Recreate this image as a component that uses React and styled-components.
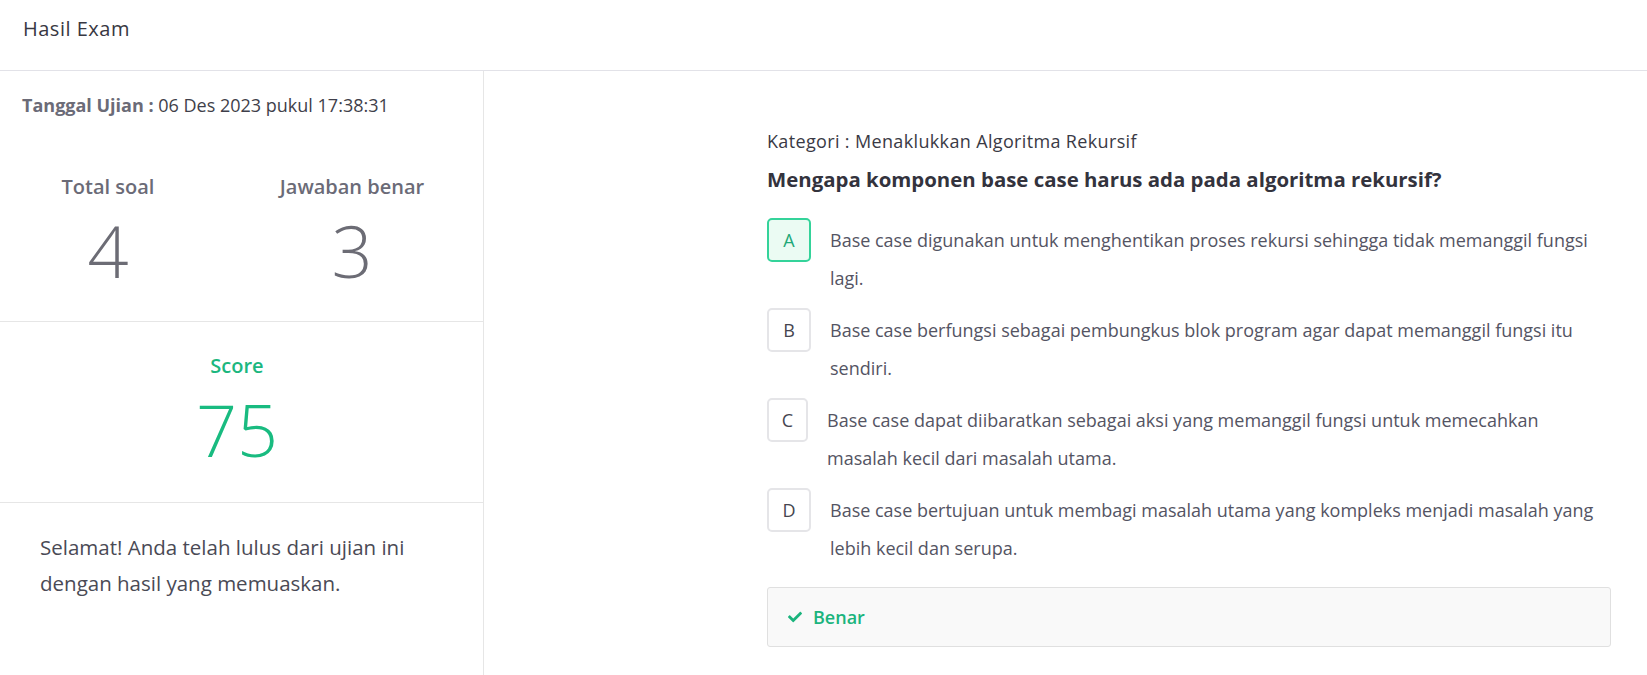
import React from "react";
import styled, { createGlobalStyle } from "styled-components";
import { FaCheck } from "react-icons/fa";

const GlobalStyle = createGlobalStyle`
  html, body { margin: 0; padding: 0; background: #fff; }
  body { font-family: "Open Sans", "Noto Sans", sans-serif; color: #3b3b45; }
  * { box-sizing: border-box; }
`;

const Page = styled.div`
  min-height: 100vh;
  display: flex;
  flex-direction: column;
`;

const Header = styled.header`
  height: 71px;
  padding: 14px 23px 0;
  border-bottom: 1px solid #e2e2e8;
  font-size: 20px;
  font-weight: 500;
  letter-spacing: 0.5px;
  line-height: 30px;
  color: #383842;
`;

const Main = styled.main`
  flex: 1;
  display: flex;
`;

const LeftPanel = styled.aside`
  width: 484px;
  flex: none;
  border-right: 1px solid #e6e6e6;
`;

const InfoSection = styled.section`
  padding: 21px 0 35px;
  border-bottom: 1px solid #e6e6e6;
`;

const DateRow = styled.div`
  padding: 0 22px;
  font-size: 18px;
  line-height: 27px;
  color: #3f3f4a;
`;

const DateLabel = styled.span`
  font-weight: 700;
  color: #6b6b77;
`;

const StatsGrid = styled.div`
  margin-top: 53px;
  display: grid;
  grid-template-columns: 216px 240px;
  column-gap: 16px;
`;

const Stat = styled.div`
  display: flex;
  flex-direction: column;
  align-items: center;
`;

const StatLabel = styled.div`
  font-size: 20px;
  font-weight: 600;
  line-height: 30px;
  color: ${(p) => p.$color || "#6b6b77"};
`;

const BigNumber = styled.div`
  margin-top: 12px;
  font-size: 72px;
  font-weight: 350;
  line-height: 72px;
  color: ${(p) => p.$color || "#6c6c75"};
`;

const ScoreSection = styled.section`
  padding: 29px 9px 37px 0;
  border-bottom: 1px solid #e6e6e6;
  display: flex;
  flex-direction: column;
  align-items: center;
`;

const Message = styled.p`
  margin: 0;
  padding: 26px 40px 0;
  font-size: 20.5px;
  line-height: 36px;
  color: #4a4a55;
`;

const RightPanel = styled.section`
  flex: 1;
  padding: 57px 36px 0 283px;
`;

const Category = styled.div`
  font-size: 18px;
  font-weight: 500;
  letter-spacing: 0.35px;
  line-height: 26px;
  color: #3a3a45;
`;

const Question = styled.h2`
  margin: 10px 0 0;
  font-size: 20.4px;
  font-weight: 700;
  line-height: 30px;
  color: #33333d;
`;

const OptionList = styled.div`
  margin-top: 24px;
  display: flex;
  flex-direction: column;
`;

const Option = styled.div`
  display: flex;
  align-items: flex-start;
  gap: 19px;
  margin-bottom: 11px;
`;

const LetterBox = styled.div`
  flex: none;
  width: ${(p) => p.$w || 44}px;
  height: 44px;
  display: flex;
  align-items: center;
  justify-content: center;
  border-radius: 5px;
  border: 2px solid ${(p) => (p.$active ? "#34d39a" : "#e5e5e8")};
  background: ${(p) => (p.$active ? "#ebfbf3" : "#fff")};
  color: ${(p) => (p.$active ? "#1fa878" : "#45454f")};
  font-size: 18px;
`;

const OptionText = styled.div`
  padding-top: 3px;
  font-size: 18px;
  line-height: 38px;
  color: #545463;
`;

const ResultBox = styled.div`
  margin-top: 9px;
  height: 60px;
  display: flex;
  align-items: center;
  gap: 11px;
  padding: 0 20px;
  background: #f9f9f9;
  border: 1px solid #e0e0e0;
  border-radius: 3px;
  color: #1bb47d;
  font-size: 18px;
  font-weight: 600;
`;

const options = [
  { key: "A", active: true, text: "Base case digunakan untuk menghentikan proses rekursi sehingga tidak memanggil fungsi lagi." },
  { key: "B", text: "Base case berfungsi sebagai pembungkus blok program agar dapat memanggil fungsi itu sendiri." },
  { key: "C", w: 41, text: "Base case dapat diibaratkan sebagai aksi yang memanggil fungsi untuk memecahkan masalah kecil dari masalah utama." },
  { key: "D", text: "Base case bertujuan untuk membagi masalah utama yang kompleks menjadi masalah yang lebih kecil dan serupa." },
];

export default function App() {
  return (
    <Page>
      <GlobalStyle />
      <Header>Hasil Exam</Header>
      <Main>
        <LeftPanel>
          <InfoSection>
            <DateRow>
              <DateLabel>Tanggal Ujian :</DateLabel> 06 Des 2023 pukul 17:38:31
            </DateRow>
            <StatsGrid>
              <Stat>
                <StatLabel>Total soal</StatLabel>
                <BigNumber>4</BigNumber>
              </Stat>
              <Stat>
                <StatLabel>Jawaban benar</StatLabel>
                <BigNumber>3</BigNumber>
              </Stat>
            </StatsGrid>
          </InfoSection>
          <ScoreSection>
            <StatLabel $color="#1cb77f">Score</StatLabel>
            <BigNumber $color="#19bb80">75</BigNumber>
          </ScoreSection>
          <Message>Selamat! Anda telah lulus dari ujian ini dengan hasil yang memuaskan.</Message>
        </LeftPanel>
        <RightPanel>
          <Category>Kategori : Menaklukkan Algoritma Rekursif</Category>
          <Question>Mengapa komponen base case harus ada pada algoritma rekursif?</Question>
          <OptionList>
            {options.map((o) => (
              <Option key={o.key}>
                <LetterBox $active={o.active} $w={o.w}>{o.key}</LetterBox>
                <OptionText>{o.text}</OptionText>
              </Option>
            ))}
          </OptionList>
          <ResultBox>
            <FaCheck size={14} />
            <span>Benar</span>
          </ResultBox>
        </RightPanel>
      </Main>
    </Page>
  );
}
